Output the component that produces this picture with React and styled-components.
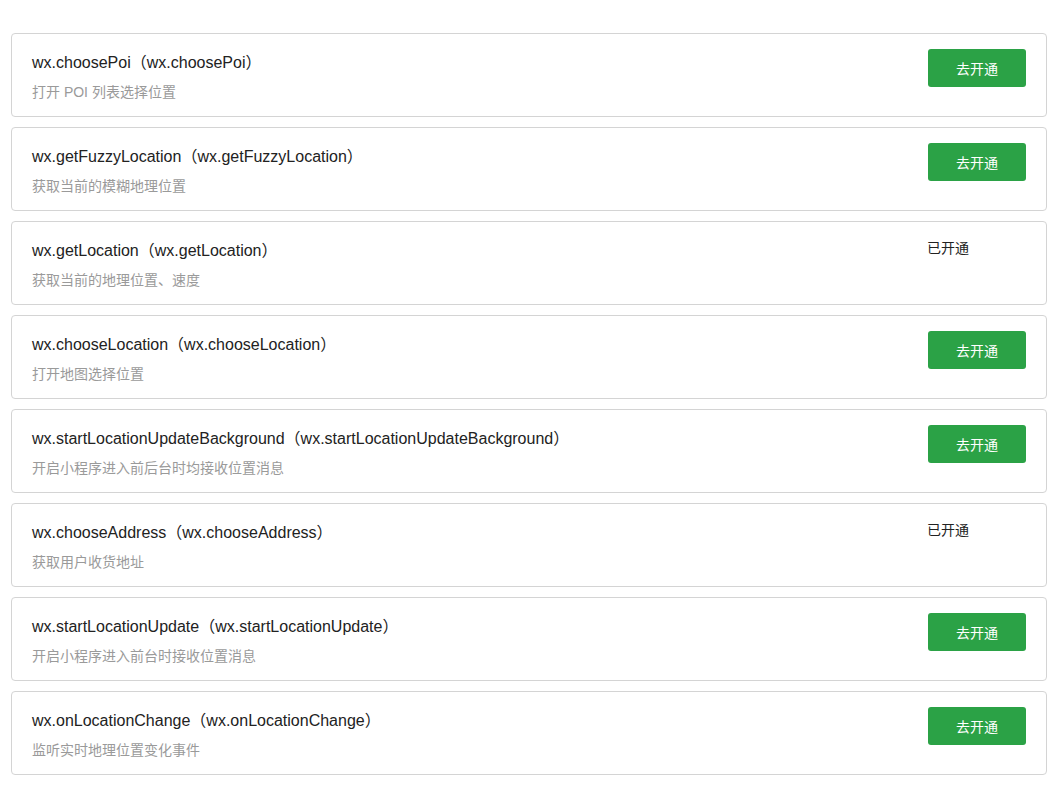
import React from "react";
import styled, { createGlobalStyle } from "styled-components";

const Global = createGlobalStyle`
  html, body { margin: 0; padding: 0; background: #fff; }
  body { font-family: "Liberation Sans", Arial, "Noto Sans CJK SC", sans-serif; }
`;

const Page = styled.div`
  padding: 33px 16px 12px 11px;
  display: flex;
  flex-direction: column;
  gap: 10px;
`;

const Card = styled.div`
  display: flex;
  align-items: flex-start;
  justify-content: space-between;
  border: 1px solid #d4d4d4;
  border-radius: 4px;
  padding: 15px 20px 14px 20px;
  background: #fff;
`;

const Info = styled.div`
  display: flex;
  flex-direction: column;
  gap: 6px;
  padding-top: 1px;
`;

const Title = styled.div`
  font-size: 16px;
  line-height: 26px;
  color: #222;
`;

const Desc = styled.div`
  font-size: 14px;
  line-height: 20px;
  color: #9a9a9a;
`;

const Action = styled.div`
  width: 98px;
  flex: none;
`;

const Button = styled.button`
  width: 98px;
  height: 38px;
  border: none;
  border-radius: 3px;
  background: #2ba246;
  color: #fff;
  font-size: 14px;
  font-family: inherit;
  cursor: pointer;
  padding: 0;
`;

const Opened = styled.div`
  font-size: 14px;
  line-height: 22px;
  color: #222;
  margin-left: -1px;
`;

const items = [
  ["wx.choosePoi", "打开 POI 列表选择位置", false],
  ["wx.getFuzzyLocation", "获取当前的模糊地理位置", false],
  ["wx.getLocation", "获取当前的地理位置、速度", true],
  ["wx.chooseLocation", "打开地图选择位置", false],
  ["wx.startLocationUpdateBackground", "开启小程序进入前后台时均接收位置消息", false],
  ["wx.chooseAddress", "获取用户收货地址", true],
  ["wx.startLocationUpdate", "开启小程序进入前台时接收位置消息", false],
  ["wx.onLocationChange", "监听实时地理位置变化事件", false],
];

export default function App() {
  return (
    <>
      <Global />
      <Page>
        {items.map(([name, desc, opened]) => (
          <Card key={name}>
            <Info>
              <Title>{name}（{name}）</Title>
              <Desc>{desc}</Desc>
            </Info>
            <Action>
              {opened ? <Opened>已开通</Opened> : <Button>去开通</Button>}
            </Action>
          </Card>
        ))}
      </Page>
    </>
  );
}
